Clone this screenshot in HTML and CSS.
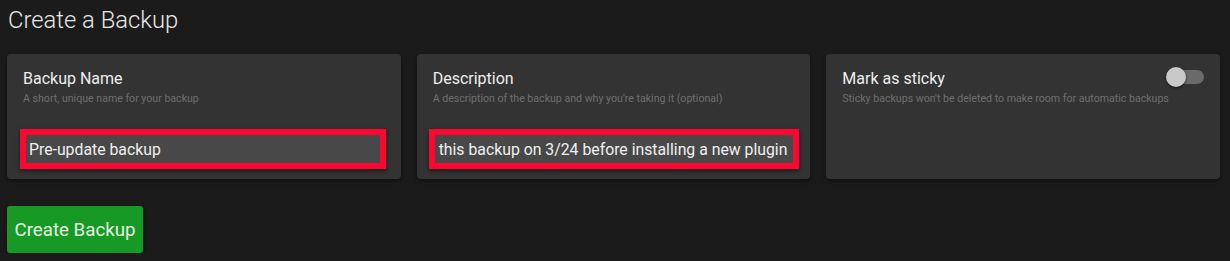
FILE: index.html
```html
<!DOCTYPE html>
<html lang="en">
<head>
<meta charset="utf-8">
<title>Create a Backup</title>
<link rel="stylesheet" href="styles.css">
</head>
<body>
<div class="page">
  <h1 class="title">Create a Backup</h1>
  <div class="cards">
    <div class="card">
      <div class="card-head">
        <div class="card-title">Backup Name</div>
      </div>
      <div class="card-sub">A short, unique name for your backup</div>
      <div class="field field-name">
        <span class="field-value">Pre-update backup</span>
      </div>
    </div>
    <div class="card">
      <div class="card-head">
        <div class="card-title">Description</div>
      </div>
      <div class="card-sub">A description of the backup and why you're taking it (optional)</div>
      <div class="field field-desc">
        <span class="field-value">this backup on 3/24 before installing a new plugin</span>
      </div>
    </div>
    <div class="card">
      <div class="card-head">
        <div class="card-title">Mark as sticky</div>
        <div class="toggle"><span class="track"></span><span class="knob"></span></div>
      </div>
      <div class="card-sub">Sticky backups won't be deleted to make room for automatic backups</div>
    </div>
  </div>
  <button class="btn-create">Create Backup</button>
</div>
</body>
</html>
```
FILE: styles.css
```css
html, body {
  margin: 0;
  padding: 0;
  background: #1b1b1b;
  font-family: Roboto, "Liberation Sans", Arial, sans-serif;
  color: #ececec;
}
.page {
  padding: 6px 10px 0 7px;
}
.title {
  margin: 0 0 0 1px;
  font-size: 23.8px;
  font-weight: 300;
  line-height: 28px;
  color: #e8e8e8;
}
.cards {
  margin-top: 20px;
  display: grid;
  grid-template-columns: repeat(3, 1fr);
  column-gap: 16px;
}
.card {
  background: #333333;
  border-radius: 4px;
  height: 125px;
  box-sizing: border-box;
  padding: 15px 15px 0 16px;
  box-shadow: 0 2px 4px rgba(0,0,0,0.45);
}
.card-head {
  display: flex;
  justify-content: space-between;
  align-items: flex-start;
  height: 20px;
}
.card-title {
  font-size: 16px;
  line-height: 20px;
  color: #eeeeee;
}
.card-sub {
  margin-top: 3px;
  font-size: 10.6px;
  line-height: 13px;
  color: #6f6f6f;
  white-space: nowrap;
}
.field {
  margin-top: 24px;
  height: 40px;
  box-sizing: border-box;
  border: 6px solid #ff0631;
  background: #484848;
  display: flex;
  align-items: center;
  padding-left: 3px;
  box-shadow: 0 2px 4px rgba(0,0,0,0.5);
  white-space: nowrap;
  overflow: hidden;
}
.field-name {
  margin-left: -3px;
  margin-right: 0;
}
.field-desc {
  margin-left: -4px;
  margin-right: -4px;
  padding-left: 4px;
}
.field-value {
  font-size: 15.8px;
  color: #f0f0f0;
}
.toggle {
  position: relative;
  width: 38px;
  height: 20px;
  margin-top: -2px;
  margin-right: 1px;
  flex: none;
}
.track {
  position: absolute;
  left: 8px;
  right: 0;
  top: 3px;
  height: 14px;
  border-radius: 7px;
  background: #6a6a6a;
}
.knob {
  position: absolute;
  left: 0;
  top: 0;
  width: 20px;
  height: 20px;
  border-radius: 50%;
  background: #c9c9c9;
  box-shadow: 0 1px 3px rgba(0,0,0,0.6);
}
.btn-create {
  margin-top: 27px;
  width: 136px;
  height: 47px;
  border: none;
  border-radius: 3px;
  background: #179a25;
  color: #e4f2e4;
  font-family: Roboto, "Liberation Sans", Arial, sans-serif;
  font-size: 18.7px;
  font-weight: 400;
  padding: 0;
  box-shadow: 0 2px 4px rgba(0,0,0,0.5);
  cursor: pointer;
}
```
